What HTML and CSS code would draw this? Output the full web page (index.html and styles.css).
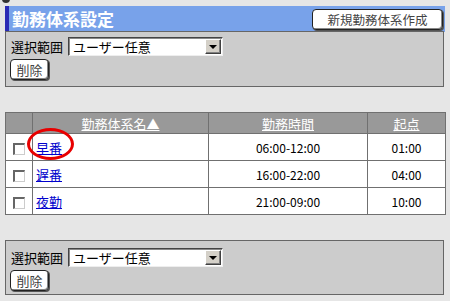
FILE: index.html
```html
<!DOCTYPE html>
<html lang="ja">
<head>
<meta charset="utf-8">
<link rel="stylesheet" href="styles.css">
</head>
<body>
<div class="corner-dot"></div>
<div class="page">
  <div class="header">
    <h1 class="title">勤務体系設定</h1>
    <button class="btn btn-new" type="button">新規勤務体系作成</button>
  </div>
  <div class="panel panel-top">
    <div class="scope-row">
      <span class="label">選択範囲</span>
      <span class="select"><span class="select-text">ユーザー任意</span><span class="select-arrow"></span></span>
    </div>
    <button class="btn btn-del" type="button">削除</button>
  </div>

  <div class="table-wrap">
    <table class="list">
      <colgroup>
        <col class="c-check"><col class="c-name"><col class="c-time"><col class="c-start">
      </colgroup>
      <thead>
        <tr><th></th><th><a href="#">勤務体系名▲</a></th><th><a href="#">勤務時間</a></th><th><a href="#">起点</a></th></tr>
      </thead>
      <tbody>
        <tr><td class="chk"><span class="checkbox"></span></td><td class="name"><a href="#">早番</a></td><td>06:00-12:00</td><td>01:00</td></tr>
        <tr><td class="chk"><span class="checkbox"></span></td><td class="name"><a href="#">遅番</a></td><td>16:00-22:00</td><td>04:00</td></tr>
        <tr><td class="chk"><span class="checkbox"></span></td><td class="name"><a href="#">夜勤</a></td><td>21:00-09:00</td><td>10:00</td></tr>
      </tbody>
    </table>
    <div class="highlight"></div>
  </div>

  <div class="panel panel-bottom">
    <div class="scope-row">
      <span class="label">選択範囲</span>
      <span class="select"><span class="select-text">ユーザー任意</span><span class="select-arrow"></span></span>
    </div>
    <button class="btn btn-del" type="button">削除</button>
  </div>
</div>
</body>
</html>
```
FILE: styles.css
```css
* { box-sizing: border-box; }
html, body { margin: 0; padding: 0; }
body {
  background: #e6e6e6;
  font-family: "Noto Sans CJK JP", "DejaVu Sans", sans-serif;
  font-size: 12px;
  color: #000;
  width: 450px;
  height: 301px;
  overflow: hidden;
  position: relative;
}
.corner-dot {
  position: absolute;
  left: 2px;
  top: -5px;
  width: 8px;
  height: 8px;
  border-radius: 50%;
  background: #333;
}
.page {
  padding: 6px 6px 0 5px;
  width: 450px;
}
.header {
  height: 26px;
  background: #78a2ea;
  border-left: 4px solid #2a2ab4;
  display: flex;
  align-items: center;
  justify-content: space-between;
  padding: 0 0 0 3px;
  width: 440px;
}
.title {
  margin: 0;
  color: #fff;
  font-size: 17px;
  font-weight: bold;
  line-height: 20px;
}
.btn {
  font-family: "Noto Sans CJK JP", "DejaVu Sans", sans-serif;
  background: #fff;
  border: 1px solid #222;
  border-radius: 4px;
  box-shadow: inset -1px -1px 0 #888, 1px 1px 0 #555;
  color: #444;
  padding: 0;
  font-size: 12px;
  line-height: 18px;
}
.btn-new {
  width: 131px;
  height: 21px;
  margin-right: 2px;
  margin-top: 1px;
  font-size: 12.5px;
  letter-spacing: 0;
}
.panel {
  background: #cccccc;
  border: 1px solid #666;
  width: 439px;
  padding: 4px 4px 0 4px;
  display: flex;
  flex-direction: column;
  align-items: flex-start;
  gap: 3px;
}
.panel-top { height: 56px; margin-top: -1px; padding-top: 5px; }
.panel-bottom { height: 55px; margin-top: 25px; padding-top: 7px; }
.scope-row {
  display: flex;
  align-items: center;
  gap: 5px;
  height: 19px;
}
.label {
  font-size: 13px;
  line-height: 19px;
  padding-left: 1px;
}
.select {
  position: relative;
  width: 155px;
  height: 19px;
  background: #fff;
  border-top: 1px solid #444;
  border-left: 1px solid #444;
  border-right: 1px solid #eee;
  border-bottom: 1px solid #eee;
  box-shadow: inset 1px 1px 0 #888;
  display: flex;
  align-items: center;
  padding-left: 4px;
}
.select-text {
  font-size: 13px;
  line-height: 17px;
  flex: 1;
}
.select-arrow {
  width: 16px;
  height: 15px;
  margin-right: 1px;
  background: #d4d0c8;
  border-top: 1px solid #fff;
  border-left: 1px solid #fff;
  border-right: 1px solid #404040;
  border-bottom: 1px solid #404040;
  box-shadow: inset -1px -1px 0 #808080;
  position: relative;
}
.select-arrow::after {
  content: "";
  position: absolute;
  left: 3px;
  top: 5px;
  border-left: 4px solid transparent;
  border-right: 4px solid transparent;
  border-top: 4px solid #000;
}
.btn-del {
  width: 39px;
  height: 21px;
  font-size: 13px;
}
.table-wrap {
  position: relative;
  margin-top: 25px;
  width: 440px;
}
.list {
  border-collapse: collapse;
  width: 440px;
  table-layout: fixed;
  background: #fff;
}
.c-check { width: 27px; }
.c-name { width: 176px; }
.c-time { width: 159px; }
.c-start { width: 78px; }
.list th, .list td {
  border: 1px solid #707070;
  padding: 0;
  text-align: center;
}
.list th {
  background: #999;
  height: 21px;
  font-weight: normal;
  font-size: 13px;
}
.list th a { color: #fff; text-decoration: underline; }
.list td {
  height: 27px;
  font-size: 12px;
}
.list td.name { text-align: left; padding-left: 3px; font-size: 13px; }
.list td.name a { color: #0000cc; text-decoration: underline; }
.checkbox {
  display: inline-block;
  width: 12px;
  height: 12px;
  vertical-align: middle;
  background: #fff;
  border-top: 2px solid #666;
  border-left: 2px solid #666;
  border-right: 1px solid #ccc;
  border-bottom: 1px solid #ccc;
}
.highlight {
  position: absolute;
  left: 22px;
  top: 16px;
  width: 47px;
  height: 32px;
  border: 3px solid #e80000;
  border-radius: 50%;
}
```
